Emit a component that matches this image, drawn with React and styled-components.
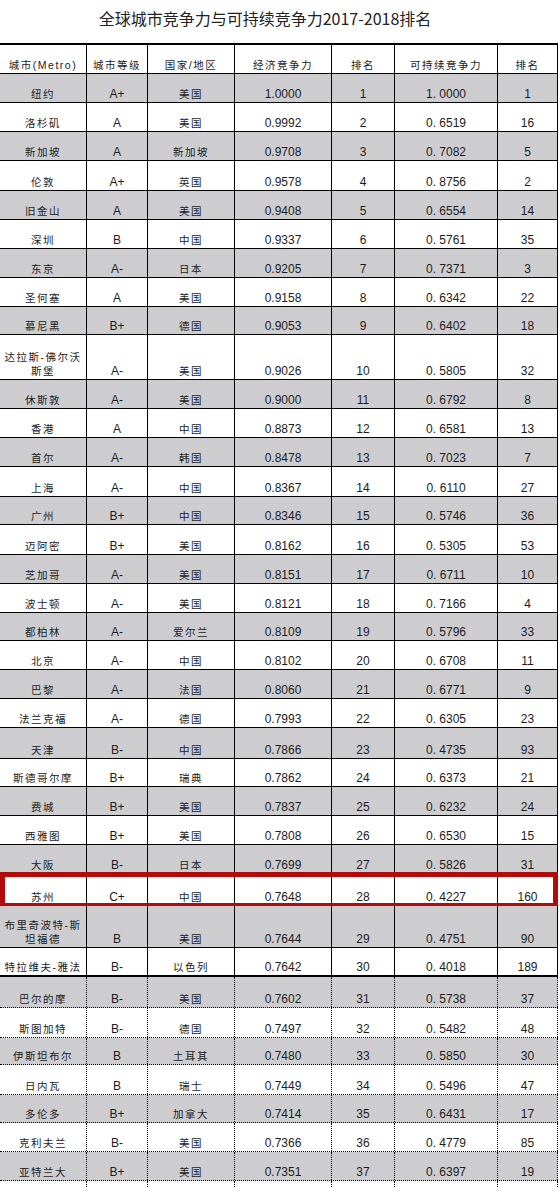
import React from 'react';
import styled, { createGlobalStyle, css } from 'styled-components';

const GlobalStyle = createGlobalStyle`
  html, body {
    margin: 0;
    padding: 0;
    background: #fff;
  }
  body {
    font-family: 'Liberation Sans', 'Noto Sans CJK SC', sans-serif;
    color: #1c1c1c;
  }
`;

const COLS = '87px 61px 87px 97px 63px 103px 60px';

const Sheet = styled.div`
  width: 560px;
  height: 1188px;
  overflow: hidden;
`;

const Title = styled.h1`
  margin: 0;
  height: 45px;
  box-sizing: border-box;
  padding: 8px 28px 0 0;
  text-align: center;
  font-family: 'Noto Sans CJK SC', sans-serif;
  font-weight: 400;
  font-size: 16px;
  line-height: 20px;
  color: #222;
  border-bottom: 2px solid #000;
  width: 558px;
`;

const lineStyles = {
  solid: css`border-bottom: 1px solid #000;`,
  thick: css`border-bottom: 2px solid #000;`,
  dotted: css`border-bottom: 1px dotted #000;`,
};

const Row = styled.div`
  position: relative;
  display: grid;
  grid-template-columns: ${COLS};
  width: 558px;
  height: ${({ $h }) => $h}px;
  box-sizing: border-box;
  background: ${({ $shade }) => ($shade ? '#cdcdd0' : '#fff')};
  ${({ $line }) => lineStyles[$line]}

  ${({ $marked }) =>
    $marked &&
    css`
      &::after {
        content: '';
        position: absolute;
        left: 0;
        right: 0;
        top: -2px;
        bottom: -3px;
        border: 5px solid #b30a0a;
        pointer-events: none;
      }
    `}
`;

const Cell = styled.div`
  display: flex;
  align-items: flex-end;
  justify-content: center;
  text-align: center;
  border-right: 1px ${({ $dotted }) => ($dotted ? 'dotted' : 'solid')} #000;
  white-space: pre-line;
  font-size: ${({ $cjk }) => ($cjk ? '10.5px' : '12px')};
  letter-spacing: ${({ $cjk }) => ($cjk ? '1.5px' : '0')};
  line-height: 14px;
  padding: 0 2px 1px;
  overflow: hidden;
`;

const header = ['城市(Metro)', '城市等级', '国家/地区', '经济竞争力', '排名', '可持续竞争力', '排名'];

// [城市, 等级, 国家, 经济, 排名, 可持续, 排名, 行高]
const data = [
  ['纽约', 'A+', '美国', '1.0000', '1', '1. 0000', '1', 29],
  ['洛杉矶', 'A', '美国', '0.9992', '2', '0. 6519', '16', 29],
  ['新加坡', 'A', '新加坡', '0.9708', '3', '0. 7082', '5', 29],
  ['伦敦', 'A+', '英国', '0.9578', '4', '0. 8756', '2', 30],
  ['旧金山', 'A', '美国', '0.9408', '5', '0. 6554', '14', 29],
  ['深圳', 'B', '中国', '0.9337', '6', '0. 5761', '35', 29],
  ['东京', 'A-', '日本', '0.9205', '7', '0. 7371', '3', 29],
  ['圣何塞', 'A', '美国', '0.9158', '8', '0. 6342', '22', 29],
  ['慕尼黑', 'B+', '德国', '0.9053', '9', '0. 6402', '18', 28],
  ['达拉斯-佛尔沃\n斯堡', 'A-', '美国', '0.9026', '10', '0. 5805', '32', 45],
  ['休斯敦', 'A-', '美国', '0.9000', '11', '0. 6792', '8', 29],
  ['香港', 'A', '中国', '0.8873', '12', '0. 6581', '13', 29],
  ['首尔', 'A-', '韩国', '0.8478', '13', '0. 7023', '7', 29],
  ['上海', 'A-', '中国', '0.8367', '14', '0. 6110', '27', 30],
  ['广州', 'B+', '中国', '0.8346', '15', '0. 5746', '36', 28],
  ['迈阿密', 'B+', '美国', '0.8162', '16', '0. 5305', '53', 30],
  ['芝加哥', 'A-', '美国', '0.8151', '17', '0. 6711', '10', 29],
  ['波士顿', 'A-', '美国', '0.8121', '18', '0. 7166', '4', 29],
  ['都柏林', 'A-', '爱尔兰', '0.8109', '19', '0. 5796', '33', 28],
  ['北京', 'A-', '中国', '0.8102', '20', '0. 6708', '11', 29],
  ['巴黎', 'A-', '法国', '0.8060', '21', '0. 6771', '9', 29],
  ['法兰克福', 'A-', '德国', '0.7993', '22', '0. 6305', '23', 29],
  ['天津', 'B-', '中国', '0.7866', '23', '0. 4735', '93', 31],
  ['斯德哥尔摩', 'B+', '瑞典', '0.7862', '24', '0. 6373', '21', 28],
  ['费城', 'B+', '美国', '0.7837', '25', '0. 6232', '24', 29],
  ['西雅图', 'B+', '美国', '0.7808', '26', '0. 6530', '15', 29],
  ['大阪', 'B-', '日本', '0.7699', '27', '0. 5826', '31', 29],
  ['苏州', 'C+', '中国', '0.7648', '28', '0. 4227', '160', 32],
  ['布里奇波特-斯\n坦福德', 'B', '美国', '0.7644', '29', '0. 4751', '90', 42],
  ['特拉维夫-雅法', 'B-', '以色列', '0.7642', '30', '0. 4018', '189', 29],
  ['巴尔的摩', 'B-', '美国', '0.7602', '31', '0. 5738', '37', 31],
  ['斯图加特', 'B-', '德国', '0.7497', '32', '0. 5482', '48', 30],
  ['伊斯坦布尔', 'B', '土耳其', '0.7480', '33', '0. 5850', '30', 27],
  ['日内瓦', 'B', '瑞士', '0.7449', '34', '0. 5496', '47', 30],
  ['多伦多', 'B+', '加拿大', '0.7414', '35', '0. 6431', '17', 28],
  ['克利夫兰', 'B-', '美国', '0.7366', '36', '0. 4779', '85', 29],
  ['亚特兰大', 'B+', '美国', '0.7351', '37', '0. 6397', '19', 29],
  ['', '', '', '', '', '', '', 29],
];

const CJK_COLS = [0, 2];

function lineFor(i) {
  if (data[i][0] === '特拉维夫-雅法') return 'thick';
  return i >= 30 ? 'dotted' : 'solid';
}

export default function App() {
  return (
    <>
      <GlobalStyle />
      <Sheet>
        <Title>全球城市竞争力与可持续竞争力2017-2018排名</Title>
        <Row $h={29} $line="solid">
          {header.map((h, j) => (
            <Cell key={j} $cjk>
              {h}
            </Cell>
          ))}
        </Row>
        {data.map((r, i) => (
          <Row
            key={i}
            $h={r[7]}
            $shade={i % 2 === 0}
            $line={lineFor(i)}
            $marked={r[0] === '苏州'}
          >
            {r.slice(0, 7).map((v, j) => (
              <Cell key={j} $cjk={CJK_COLS.includes(j)} $dotted={i >= 30}>
                {v}
              </Cell>
            ))}
          </Row>
        ))}
      </Sheet>
    </>
  );
}
